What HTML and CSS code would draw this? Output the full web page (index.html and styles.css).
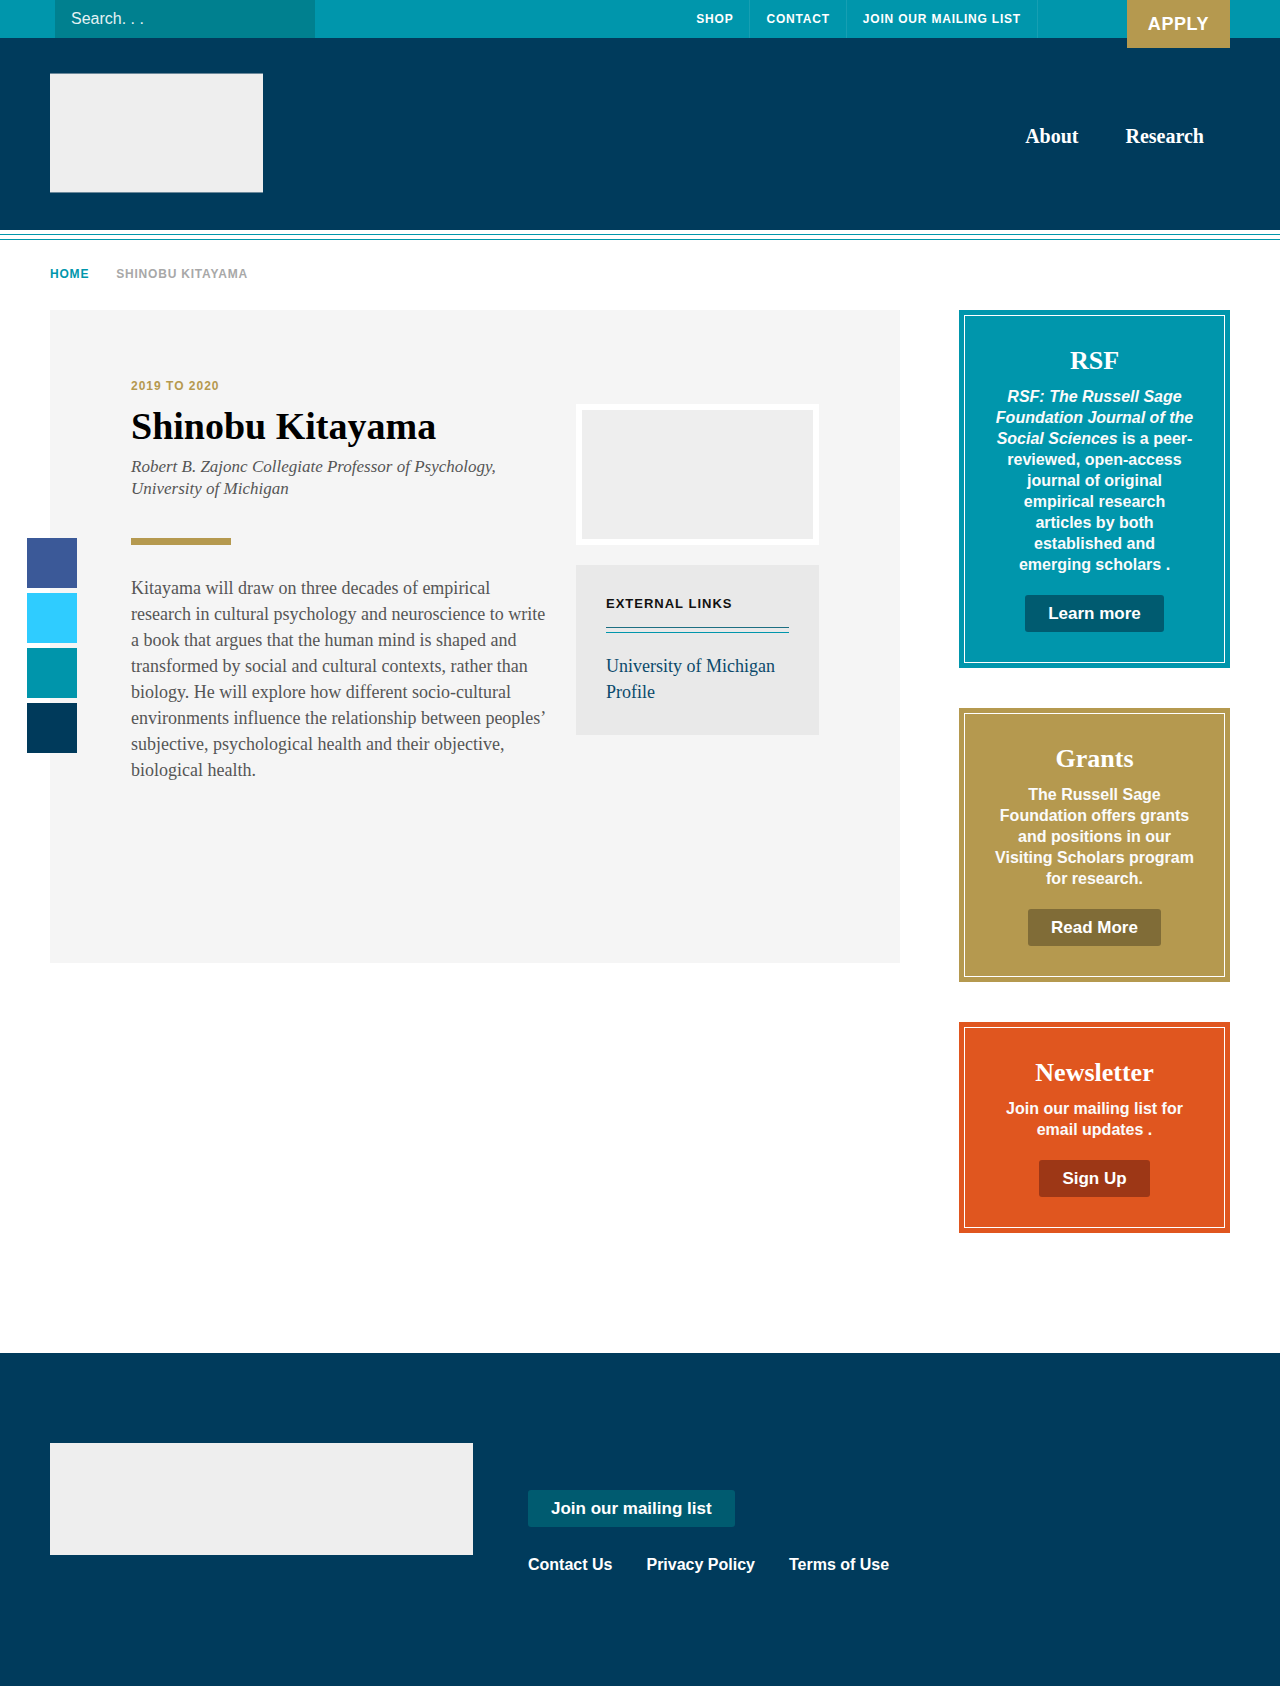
FILE: index.html
```html
<!DOCTYPE html>
<html lang="en">
<head>
<meta charset="utf-8">
<title>Shinobu Kitayama | Russell Sage Foundation</title>
<link rel="stylesheet" href="styles.css">
</head>
<body>
<div class="topbar">
  <div class="container topbar-inner">
    <form class="search" action="#"><input class="search-input" type="text" placeholder="Search. . ." aria-label="Search"></form>
    <nav class="utility">
      <a href="#">Shop</a>
      <a href="#">Contact</a>
      <a href="#">Join our mailing list</a>
    </nav>
    <a class="apply" href="#">Apply</a>
  </div>
</div>

<header class="masthead">
  <div class="container masthead-inner">
    <a class="logo" href="#" aria-label="Russell Sage Foundation"></a>
    <nav class="main-nav">
      <a href="#">About</a>
      <a href="#">Research</a>
    </nav>
  </div>
</header>
<div class="rule"></div>

<div class="container breadcrumb">
  <a class="crumb-home" href="#">Home</a>
  <span class="crumb-current">Shinobu Kitayama</span>
</div>

<main class="container main">
  <article class="card">
    <div class="share">
      <a class="share-btn fb" href="#" aria-label="Facebook"></a>
      <a class="share-btn tw" href="#" aria-label="Twitter"></a>
      <a class="share-btn li" href="#" aria-label="LinkedIn"></a>
      <a class="share-btn em" href="#" aria-label="Email"></a>
    </div>
    <div class="card-main">
      <div class="year">2019 to 2020</div>
      <h1 class="name">Shinobu Kitayama</h1>
      <p class="subtitle">Robert B. Zajonc Collegiate Professor of Psychology, University of Michigan</p>
      <div class="gold-bar"></div>
      <p class="bio">Kitayama will draw on three decades of empirical research in cultural psychology and neuroscience to write a book that argues that the human mind is shaped and transformed by social and cultural contexts, rather than biology. He will explore how different socio-cultural environments influence the relationship between peoples’ subjective, psychological health and their objective, biological health.</p>
    </div>
    <div class="card-side">
      <div class="photo"></div>
      <div class="links-box">
        <h2 class="links-title">External Links</h2>
        <div class="links-rule"></div>
        <a class="ext-link" href="#">University of Michigan Profile</a>
      </div>
    </div>
  </article>

  <aside class="sidebar">
    <section class="promo promo-rsf">
      <div class="promo-inner">
        <h3 class="promo-title">RSF</h3>
        <p class="promo-text"><em>RSF: The Russell Sage Foundation Journal of the Social Sciences</em> is a peer-reviewed, open-access journal of original empirical research articles by both established and emerging&nbsp;scholars .</p>
        <a class="btn btn-rsf" href="#">Learn more</a>
      </div>
    </section>
    <section class="promo promo-grants">
      <div class="promo-inner">
        <h3 class="promo-title">Grants</h3>
        <p class="promo-text">The Russell Sage Foundation offers grants and positions in our Visiting Scholars program for research.</p>
        <a class="btn btn-grants" href="#">Read More</a>
      </div>
    </section>
    <section class="promo promo-news">
      <div class="promo-inner">
        <h3 class="promo-title">Newsletter</h3>
        <p class="promo-text">Join our mailing list for email updates .</p>
        <a class="btn btn-news" href="#">Sign Up</a>
      </div>
    </section>
  </aside>
</main>

<footer class="footer">
  <div class="container footer-inner">
    <div class="footer-logo"></div>
    <div class="footer-right">
      <a class="btn btn-rsf footer-btn" href="#">Join our mailing list</a>
      <nav class="footer-links">
        <a href="#">Contact Us</a>
        <a href="#">Privacy Policy</a>
        <a href="#">Terms of Use</a>
      </nav>
    </div>
  </div>
</footer>
</body>
</html>
```

FILE: styles.css
```css
* { box-sizing: border-box; }

body {
  margin: 0;
  background: #fff;
  font-family: "Liberation Sans", Arial, sans-serif;
  color: #333;
}

a { text-decoration: none; color: inherit; }

.container {
  width: 1180px;
  margin: 0 auto;
}

/* ---------- top bar ---------- */
.topbar {
  background: #0096ac;
  height: 38px;
}

.topbar-inner {
  display: flex;
  align-items: flex-start;
  height: 38px;
}

.search {
  margin: 0 0 0 5px;
}

.search-input {
  display: block;
  width: 260px;
  height: 38px;
  border: 0;
  padding: 0 16px;
  background: #00808f;
  color: #fff;
  font-family: "Liberation Sans", Arial, sans-serif;
  font-size: 16px;
  outline: none;
}

.search-input::placeholder {
  color: #e4f2f4;
  opacity: 1;
}

.utility {
  margin-left: auto;
  display: flex;
}

.utility a {
  display: block;
  padding: 0 16px;
  line-height: 38px;
  border-right: 1px solid rgba(255, 255, 255, 0.09);
  color: #fff;
  font-size: 12px;
  font-weight: bold;
  letter-spacing: 0.8px;
  text-transform: uppercase;
}

.apply {
  position: relative;
  z-index: 2;
  display: block;
  margin-left: 89px;
  width: 103px;
  height: 48px;
  line-height: 48px;
  text-align: center;
  background: #b5994f;
  color: #fff;
  font-size: 18px;
  font-weight: bold;
  letter-spacing: 0.6px;
  text-transform: uppercase;
}

/* ---------- masthead ---------- */
.masthead {
  background: #003b5c;
  height: 192px;
}

.masthead-inner {
  display: flex;
  justify-content: space-between;
  align-items: flex-start;
  padding-top: 35px;
}

.logo {
  display: block;
  width: 213px;
  height: 120px;
  background: #eeeeee;
  border-top: 1px solid #6b889a;
  border-bottom: 1px solid #6b889a;
}

.main-nav {
  display: flex;
  gap: 47px;
  margin-top: 51px;
  margin-right: 26px;
}

.main-nav a {
  font-family: "Liberation Serif", "Times New Roman", serif;
  font-weight: bold;
  font-size: 20px;
  line-height: 24px;
  color: #fff;
}

.rule {
  margin-top: 4px;
  height: 6px;
  border-top: 1px solid #0096ac;
  border-bottom: 1px solid #0096ac;
}

/* ---------- breadcrumb ---------- */
.breadcrumb {
  display: flex;
  gap: 27px;
  padding-top: 26px;
  font-size: 12px;
  line-height: 16px;
  font-weight: bold;
  letter-spacing: 0.8px;
  text-transform: uppercase;
}

.crumb-home { color: #0096ac; }
.crumb-current { color: #a8a8a8; }

/* ---------- main ---------- */
.main {
  display: flex;
  justify-content: space-between;
  align-items: flex-start;
  margin-top: 28px;
  padding-bottom: 120px;
}

.card {
  position: relative;
  width: 850px;
  background: #f5f5f5;
  padding: 68px 81px 180px;
  display: grid;
  grid-template-columns: 420px 243px;
  column-gap: 25px;
  align-items: start;
}

.share {
  position: absolute;
  left: -23px;
  top: 228px;
  display: flex;
  flex-direction: column;
  gap: 5px;
}

.share-btn {
  display: block;
  width: 50px;
  height: 50px;
}

.share-btn.fb { background: #3b5998; }
.share-btn.tw { background: #2fccff; }
.share-btn.li { background: #0095ab; }
.share-btn.em { background: #003a5b; }

.year {
  font-size: 12px;
  line-height: 16px;
  font-weight: bold;
  letter-spacing: 1px;
  color: #b5994f;
  text-transform: uppercase;
}

.name {
  margin: 9px 0 0;
  font-family: "Liberation Serif", "Times New Roman", serif;
  font-weight: bold;
  font-size: 38px;
  line-height: 46px;
  color: #000;
}

.subtitle {
  margin: 7px 0 0;
  font-family: "Liberation Serif", "Times New Roman", serif;
  font-style: italic;
  font-size: 17px;
  line-height: 22px;
  color: #555;
}

.gold-bar {
  margin-top: 38px;
  width: 100px;
  height: 7px;
  background: #b5994f;
}

.bio {
  margin: 30px 0 0;
  font-family: "Liberation Serif", "Times New Roman", serif;
  font-size: 18px;
  line-height: 26px;
  color: #555;
}

.card-side {
  margin-top: 26px;
}

.photo {
  height: 141px;
  border: 6px solid #fff;
  background: #eeeeee;
}

.links-box {
  margin-top: 20px;
  background: #e9e9e9;
  padding: 31px 30px 30px;
}

.links-title {
  margin: 0;
  font-size: 13px;
  line-height: 16px;
  font-weight: bold;
  letter-spacing: 1px;
  color: #111;
  text-transform: uppercase;
}

.links-rule {
  margin-top: 15px;
  height: 6px;
  border-top: 1px solid #1d6f82;
  border-bottom: 1px solid #0096ac;
}

.ext-link {
  display: block;
  margin-top: 20px;
  font-family: "Liberation Serif", "Times New Roman", serif;
  font-size: 18px;
  line-height: 26px;
  color: #0b4a6b;
}

/* ---------- sidebar ---------- */
.sidebar {
  width: 271px;
  display: flex;
  flex-direction: column;
  gap: 40px;
}

.promo {
  padding: 5px;
}

.promo-rsf { background: #0096ac; }
.promo-grants { background: #b5994f; }
.promo-news { background: #e0561f; }

.promo-inner {
  border: 1px solid #fff;
  padding: 29px 0 30px;
  text-align: center;
  color: #fff;
}

.promo-title {
  margin: 0;
  font-family: "Liberation Serif", "Times New Roman", serif;
  font-weight: bold;
  font-size: 26px;
  line-height: 31px;
  color: #fff;
}

.promo-text {
  max-width: 200px;
  margin: 10px auto 0;
  font-size: 16px;
  line-height: 21px;
  font-weight: bold;
  color: #fbfbfb;
}

.btn {
  display: block;
  width: fit-content;
  margin: 20px auto 0;
  height: 37px;
  line-height: 37px;
  padding: 0 23px;
  border-radius: 3px;
  font-size: 17px;
  font-weight: bold;
  color: #fff;
}

.btn-rsf { background: #005b70; }
.btn-grants { background: #806c37; }
.btn-news { background: #9d3716; }

/* ---------- footer ---------- */
.footer {
  background: #003b5c;
  padding: 90px 0 111px;
}

.footer-inner {
  display: flex;
  align-items: flex-start;
  gap: 55px;
}

.footer-logo {
  width: 423px;
  height: 112px;
  background: #eeeeee;
}

.footer-right {
  padding-top: 47px;
}

.footer-btn {
  margin: 0;
}

.footer-links {
  display: flex;
  gap: 34px;
  margin-top: 28px;
}

.footer-links a {
  font-size: 16px;
  line-height: 20px;
  font-weight: bold;
  color: #fff;
}
```
